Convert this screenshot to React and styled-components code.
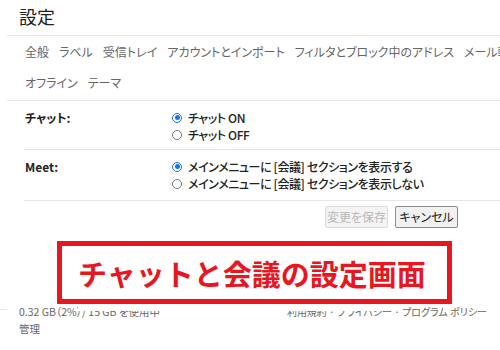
import React from "react";
import styled, { createGlobalStyle } from "styled-components";

const Global = createGlobalStyle`
  html, body { margin: 0; padding: 0; background: #fff; }
  body { font-family: "Noto Sans CJK JP", "Noto Sans", sans-serif; }
`;

const Page = styled.div`
  position: relative;
  width: 500px;
  height: 350px;
  overflow: hidden;
  background: #fff;
`;

const Title = styled.h1`
  margin: 0;
  height: 35px;
  padding-left: 19px;
  font-size: 18px;
  font-weight: 400;
  line-height: 32px;
  color: #222;
`;

const Divider = styled.div`
  margin-left: ${(p) => p.$inset || 0}px;
  border-top: 1px solid #e6e6e6;
`;

const Tabs = styled.nav`
  height: 64px;
  padding-left: 25px;
  display: flex;
  flex-direction: column;
  overflow: hidden;
`;

const TabRow = styled.div`
  height: 31px;
  display: flex;
  align-items: center;
  gap: 10px;
  white-space: nowrap;
`;

const Tab = styled.span`
  font-size: 12px;
  color: #666;
  font-feature-settings: "palt";
`;

const Section = styled.div`
  display: grid;
  grid-template-columns: 148px 1fr;
  margin-left: 24px;
  padding: ${(p) => p.$pad || "8px 0 6px"};
  border-bottom: 1px solid #e6e6e6;
`;

const Label = styled.div`
  padding-left: 1px;
  font-size: 12px;
  font-weight: 700;
  color: #222;
  line-height: 17px;
  font-feature-settings: "palt";
`;

const Options = styled.div`
  display: flex;
  flex-direction: column;
`;

const Option = styled.label`
  display: flex;
  align-items: center;
  height: 17px;
  line-height: 16px;
  font-size: 12px;
  letter-spacing: -0.4px;
  color: #222;
  font-weight: 500;
  font-feature-settings: "palt";
  white-space: nowrap;
`;

const Radio = styled.span`
  box-sizing: border-box;
  flex: none;
  width: 10px;
  height: 10px;
  border-radius: 50%;
  margin: 0 6px 0 0;
  border: 1px solid ${(p) => (p.$on ? "#1a73e8" : "#777")};
  display: flex;
  align-items: center;
  justify-content: center;
  &::after {
    content: "";
    width: 5px;
    height: 5px;
    border-radius: 50%;
    background: ${(p) => (p.$on ? "#1a73e8" : "transparent")};
  }
`;

const Actions = styled.div`
  display: flex;
  justify-content: flex-end;
  gap: 7px;
  padding: 5px 42px 0 0;
`;

const Button = styled.button`
  height: 22px;
  width: 63px;
  padding: 0;
  font-family: inherit;
  font-size: 12px;
  font-feature-settings: "palt";
  border-radius: 2px;
  border: 1px solid ${(p) => (p.disabled ? "#dcdcdc" : "#8a8a8a")};
  background: ${(p) => (p.disabled ? "#f4f4f4" : "#f1f1f1")};
  color: ${(p) => (p.disabled ? "#b8b8b8" : "#222")};
  line-height: 20px;
`;

const Footer = styled.footer`
  position: absolute;
  left: 0;
  right: 0;
  top: 303px;
  display: flex;
  justify-content: space-between;
  padding: 0 13px 0 19px;
  font-size: 10.5px;
  color: #666;
  line-height: 17px;
  font-feature-settings: "palt";
`;

const FooterCol = styled.div`
  display: flex;
  flex-direction: column;
`;

const Links = styled.span`
  font-size: 10px;
`;

const Edge = styled.div`
  position: absolute;
  left: 0;
  top: 309px;
  width: 7px;
  border-top: 1px solid #e6e6e6;
`;

const Cover = styled.div`
  position: absolute;
  left: 78px;
  top: 300px;
  width: 322px;
  height: 11px;
  background: #fff;
`;

const Callout = styled.div`
  position: absolute;
  left: 57px;
  top: 241px;
  width: 395px;
  height: 63px;
  box-sizing: border-box;
  border: 5px solid #e8161e;
  background: #fff;
  display: flex;
  align-items: center;
  padding-left: 16px;
  font-size: 29px;
  font-weight: 700;
  color: #e8161e;
  white-space: nowrap;
`;

export default function App() {
  return (
    <Page>
      <Global />
      <Title>設定</Title>
      <Divider $inset={7} />
      <Tabs>
        <TabRow>
          {["全般", "ラベル", "受信トレイ", "アカウントとインポート", "フィルタとブロック中のアドレス", "メール転送と POP/IMAP"].map((t) => (
            <Tab key={t}>{t}</Tab>
          ))}
        </TabRow>
        <TabRow>
          <Tab>オフライン</Tab>
          <Tab>テーマ</Tab>
        </TabRow>
      </Tabs>
      <Divider $inset={7} />
      <Section>
        <Label>チャット:</Label>
        <Options>
          <Option><Radio $on />チャット ON</Option>
          <Option><Radio />チャット OFF</Option>
        </Options>
      </Section>
      <Section $pad="8px 0 8px">
        <Label>Meet:</Label>
        <Options>
          <Option><Radio $on />メインメニューに [会議] セクションを表示する</Option>
          <Option><Radio />メインメニューに [会議] セクションを表示しない</Option>
        </Options>
      </Section>
      <Actions>
        <Button disabled>変更を保存</Button>
        <Button>キャンセル</Button>
      </Actions>
      <Edge />
      <Footer>
        <FooterCol>
          <span>0.32 GB（2%）/ 15 GB を使用中</span>
          <span>管理</span>
        </FooterCol>
        <FooterCol>
          <Links>利用規約 · プライバシー · プログラム ポリシー</Links>
        </FooterCol>
      </Footer>
      <Cover />
      <Callout>チャットと会議の設定画面</Callout>
    </Page>
  );
}
